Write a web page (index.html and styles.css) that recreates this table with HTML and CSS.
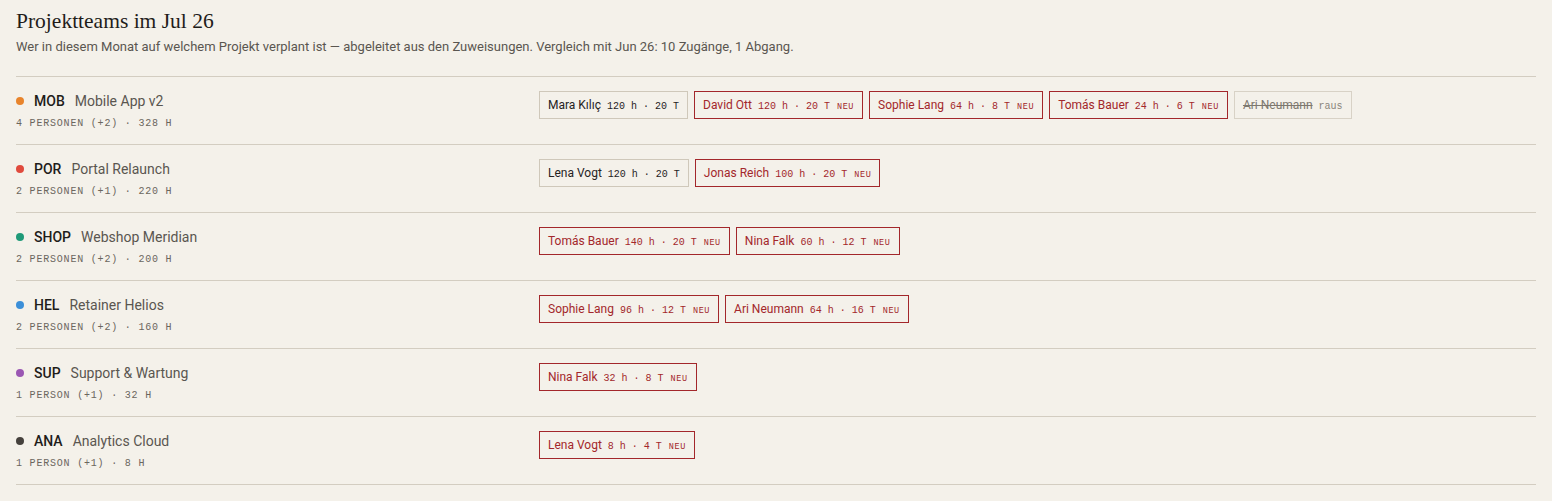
FILE: index.html
```html
<!DOCTYPE html>
<html lang="de">
<head>
    <meta charset="UTF-8">
    <title>Projektteams</title>
    <link rel="stylesheet" href="styles.css">
</head>
<body>
    <div class="page">
        <header class="head">
            <h1>Projektteams im Jul 26</h1>
            <p>Wer in diesem Monat auf welchem Projekt verplant ist — abgeleitet aus den Zuweisungen. Vergleich mit Jun 26: 10 Zugänge, 1 Abgang.</p>
        </header>

        <div class="teams">
            <div class="team">
                <div class="proj">
                    <div class="proj-line"><span class="dot orange"></span><span class="code">MOB</span><span class="name">Mobile App v2</span></div>
                    <div class="meta">4 Personen (+2) · 328 h</div>
                </div>
                <div class="chips">
                    <span class="chip"><span class="who">Mara Kılıç</span><span class="hrs">120 h · 20 T</span></span>
                    <span class="chip new"><span class="who">David Ott</span><span class="hrs">120 h · 20 T</span><span class="tag">neu</span></span>
                    <span class="chip new"><span class="who">Sophie Lang</span><span class="hrs">64 h · 8 T</span><span class="tag">neu</span></span>
                    <span class="chip new"><span class="who">Tomás Bauer</span><span class="hrs">24 h · 6 T</span><span class="tag">neu</span></span>
                    <span class="chip gone"><span class="who">Ari Neumann</span><span class="hrs">raus</span></span>
                </div>
            </div>

            <div class="team">
                <div class="proj">
                    <div class="proj-line"><span class="dot red"></span><span class="code">POR</span><span class="name">Portal Relaunch</span></div>
                    <div class="meta">2 Personen (+1) · 220 h</div>
                </div>
                <div class="chips">
                    <span class="chip"><span class="who">Lena Vogt</span><span class="hrs">120 h · 20 T</span></span>
                    <span class="chip new"><span class="who">Jonas Reich</span><span class="hrs">100 h · 20 T</span><span class="tag">neu</span></span>
                </div>
            </div>

            <div class="team">
                <div class="proj">
                    <div class="proj-line"><span class="dot green"></span><span class="code">SHOP</span><span class="name">Webshop Meridian</span></div>
                    <div class="meta">2 Personen (+2) · 200 h</div>
                </div>
                <div class="chips">
                    <span class="chip new"><span class="who">Tomás Bauer</span><span class="hrs">140 h · 20 T</span><span class="tag">neu</span></span>
                    <span class="chip new"><span class="who">Nina Falk</span><span class="hrs">60 h · 12 T</span><span class="tag">neu</span></span>
                </div>
            </div>

            <div class="team">
                <div class="proj">
                    <div class="proj-line"><span class="dot blue"></span><span class="code">HEL</span><span class="name">Retainer Helios</span></div>
                    <div class="meta">2 Personen (+2) · 160 h</div>
                </div>
                <div class="chips">
                    <span class="chip new"><span class="who">Sophie Lang</span><span class="hrs">96 h · 12 T</span><span class="tag">neu</span></span>
                    <span class="chip new"><span class="who">Ari Neumann</span><span class="hrs">64 h · 16 T</span><span class="tag">neu</span></span>
                </div>
            </div>

            <div class="team">
                <div class="proj">
                    <div class="proj-line"><span class="dot purple"></span><span class="code">SUP</span><span class="name">Support &amp; Wartung</span></div>
                    <div class="meta">1 Person (+1) · 32 h</div>
                </div>
                <div class="chips">
                    <span class="chip new"><span class="who">Nina Falk</span><span class="hrs">32 h · 8 T</span><span class="tag">neu</span></span>
                </div>
            </div>

            <div class="team">
                <div class="proj">
                    <div class="proj-line"><span class="dot dark"></span><span class="code">ANA</span><span class="name">Analytics Cloud</span></div>
                    <div class="meta">1 Person (+1) · 8 h</div>
                </div>
                <div class="chips">
                    <span class="chip new"><span class="who">Lena Vogt</span><span class="hrs">8 h · 4 T</span><span class="tag">neu</span></span>
                </div>
            </div>
        </div>
    </div>
</body>
</html>
```

FILE: styles.css
```css
/* Grundlayout */
body {
    margin: 0;
    background-color: #f4f1ea;
    color: #222;
    font-family: Roboto, "Noto Sans", sans-serif;
}

.page {
    padding: 8px 16px 0 16px;
}

.head h1 {
    margin: 0;
    font-family: "Liberation Serif", "DejaVu Serif", serif;
    font-size: 21.5px;
    font-weight: normal;
    line-height: 26px;
    color: #1f1d1a;
}

.head p {
    margin: 5px 0 0 0;
    font-size: 13px;
    line-height: 16px;
    color: #5a5650;
}

/* Projektliste */
.teams {
    margin-top: 21px;
    border-top: 1px solid #d3cdc1;
}

.team {
    display: grid;
    grid-template-columns: 523px 1fr;
    height: 67px;
    border-bottom: 1px solid #d3cdc1;
}

.proj {
    padding-top: 15px;
}

.proj-line {
    display: flex;
    align-items: center;
    height: 18px;
}

.dot {
    width: 8px;
    height: 8px;
    border-radius: 50%;
    margin-right: 10px;
}

.dot.orange { background-color: #e8842c; }
.dot.red { background-color: #e04a3d; }
.dot.green { background-color: #1f9a78; }
.dot.blue { background-color: #3b8fd8; }
.dot.purple { background-color: #9a57b3; }
.dot.dark { background-color: #45413c; }

.code {
    font-size: 14px;
    font-weight: 500;
    color: #1f1d1a;
    margin-right: 10px;
}

.name {
    font-size: 14px;
    color: #5a5650;
}

.meta {
    margin-top: 8px;
    font-family: "Liberation Mono", "DejaVu Sans Mono", monospace;
    font-size: 10px;
    letter-spacing: 0.8px;
    text-transform: uppercase;
    color: #6b665e;
}

/* Personen-Chips */
.chips {
    display: flex;
    align-items: flex-start;
    gap: 6px;
    padding-top: 14px;
}

.chip {
    display: flex;
    align-items: baseline;
    height: 26px;
    line-height: 26px;
    padding: 0 8px;
    border: 1px solid #cfc8ba;
    color: #26231f;
}

.who {
    font-size: 12px;
}

.hrs {
    margin-left: 6px;
    font-family: "Liberation Mono", "DejaVu Sans Mono", monospace;
    font-size: 10px;
}

.tag {
    margin-left: 7px;
    font-family: "Liberation Mono", "DejaVu Sans Mono", monospace;
    font-size: 8.5px;
    letter-spacing: 0.6px;
    text-transform: uppercase;
}

.chip.new {
    border-color: #a3272b;
    color: #a3272b;
}

.chip.gone {
    color: #8a857c;
    border-color: #d8d2c6;
}

.chip.gone .who {
    text-decoration: line-through;
    color: #7d786f;
}
```
